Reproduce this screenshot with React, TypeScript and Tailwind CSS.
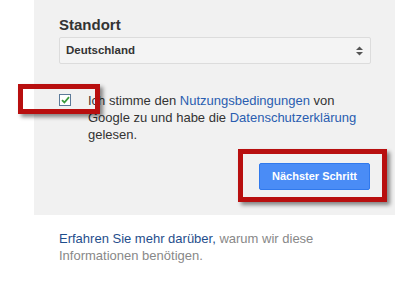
import { ChevronsUpDown } from 'lucide-react';

function RedMark({ className }: { className: string }) {
  return (
    <div
      className={`pointer-events-none absolute border-[5px] border-[#b80f0f] shadow-[3px_3px_4px_rgba(0,0,0,0.45)] ${className}`}
    />
  );
}

export default function App() {
  return (
    <div className="relative h-[288px] w-[406px] overflow-hidden bg-white font-['Liberation_Sans',Arial,sans-serif] text-[13px] leading-[17px] text-[#333]">
      {/* Panel */}
      <div className="ml-[34px] w-[361px] bg-[#f1f1f1] px-[25px] pt-[16px] pb-[25px]">
        <div className="text-[15px] font-bold leading-[18px] text-[#333]">Standort</div>
        <div className="mt-[3px] flex h-[27px] w-[312px] items-center justify-between rounded-[2px] border border-[#dcdcdc] bg-[#f4f4f4] pl-[6px] pr-[4px]">
          <span className="text-[11.5px] font-bold text-[#333]">Deutschland</span>
          <svg width="9" height="12" viewBox="0 0 9 12" className="mr-[2px]">
            <path d="M1 5 L4.5 1.5 L8 5 Z" fill="#555" />
            <path d="M1 7 L4.5 10.5 L8 7 Z" fill="#555" />
          </svg>
        </div>

        <div className="mt-[28px] flex items-start">
          <div className="mt-[2px] flex h-[12px] w-[12px] shrink-0 items-center justify-center border border-[#5c7a99] bg-white">
            <svg width="9" height="8" viewBox="0 0 9 8">
              <path d="M1 4.2 L3.4 6.5 L8 1.2" stroke="#3b9c3b" strokeWidth="1.8" fill="none" />
            </svg>
          </div>
          <p className="ml-[17px] w-[270px]">
            Ich stimme den <span className="text-[#2a5db0]">Nutzungsbedingungen</span> von Google zu und habe die{' '}
            <span className="text-[#2a5db0]">Datenschutzerklärung</span> gelesen.
          </p>
        </div>

        <div className="mt-[20px] flex justify-end">
          <button className="h-[27px] w-[111px] rounded-[2px] border border-[#3079ed] bg-[#4a8cf6] text-[11px] font-bold text-white">
            Nächster Schritt
          </button>
        </div>
      </div>

      {/* Footer */}
      <p className="ml-[59px] mt-[15px] w-[300px] text-[#888]">
        <span className="text-[#1f4e8c]">Erfahren Sie mehr darüber,</span> warum wir diese Informationen benötigen.
      </p>

      {/* Annotations */}
      <RedMark className="left-[18px] top-[84px] h-[30px] w-[82px]" />
      <RedMark className="left-[238px] top-[149px] h-[53px] w-[149px]" />
    </div>
  );
}
